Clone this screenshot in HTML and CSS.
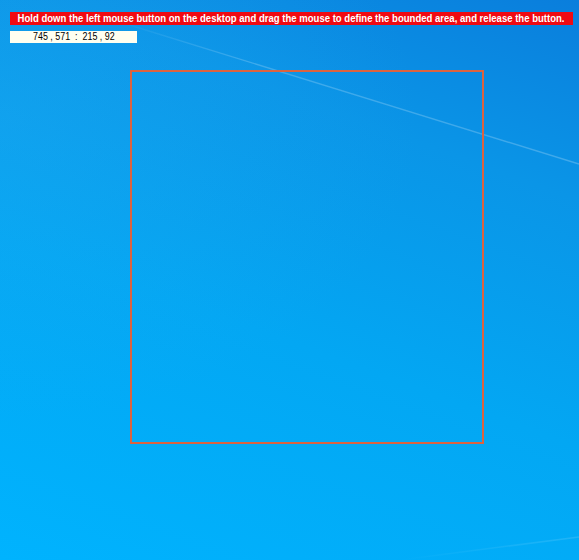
FILE: index.html
```html
<!DOCTYPE html>
<html lang="en">

<head>
  <meta charset="UTF-8">
  <meta name="viewport" content="width=device-width, initial-scale=1.0">
  <title>Define bounded area</title>
  <link rel="stylesheet" href="styles.css">
</head>

<body>
  <div class="desktop">
    <svg class="wallpaper-lines" width="579" height="560" viewBox="0 0 579 560">
      <defs>
        <linearGradient id="streak" x1="0" y1="0" x2="1" y2="0">
          <stop offset="0" stop-color="#ffffff" stop-opacity="0"></stop>
          <stop offset="0.3" stop-color="#ffffff" stop-opacity="0.2"></stop>
          <stop offset="1" stop-color="#ffffff" stop-opacity="0.22"></stop>
        </linearGradient>
        <linearGradient id="streak2" x1="0" y1="0" x2="1" y2="0">
          <stop offset="0" stop-color="#ffffff" stop-opacity="0"></stop>
          <stop offset="1" stop-color="#ffffff" stop-opacity="0.12"></stop>
        </linearGradient>
      </defs>
      <line x1="110" y1="19" x2="579" y2="164" stroke="url(#streak)" stroke-width="1.4"></line>
      <line x1="400" y1="560" x2="579" y2="537" stroke="url(#streak2)" stroke-width="1.5"></line>
    </svg>

    <div class="hint-bar"><span class="condensed">Hold down the left mouse button on the desktop and drag the mouse to define the bounded area, and release the button.</span></div>
    <div class="coords"><span class="condensed">745 , 571&nbsp;&nbsp;:&nbsp;&nbsp;215 , 92</span></div>

    <div class="selection"></div>
  </div>
</body>

</html>
```

FILE: styles.css
```css
html,
body {
  margin: 0;
  padding: 0;
}

body {
  font-family: "Liberation Sans", Arial, sans-serif;
  background-color: #069fec;
}

.desktop {
  position: relative;
  width: 579px;
  height: 560px;
  overflow: hidden;
  padding: 12px 6px 0 10px;
  box-sizing: border-box;
  background:
    radial-gradient(ellipse 420px 300px at 0px 120px, rgba(40, 170, 240, 0.3), rgba(40, 170, 240, 0)),
    linear-gradient(200deg, #0a7edc 0%, #0a95e7 26%, #03a7f3 58%, #00b3fe 100%);
}

.wallpaper-lines {
  position: absolute;
  top: 0;
  left: 0;
}

.condensed {
  display: inline-block;
  white-space: nowrap;
}

.hint-bar {
  position: relative;
  display: flex;
  justify-content: center;
  height: 13px;
  line-height: 13px;
  background-color: #f00a12;
  color: #ffffff;
  font-weight: bold;
  font-size: 11px;
}

.hint-bar .condensed {
  transform: scaleX(0.868);
}

.coords {
  position: relative;
  display: flex;
  justify-content: center;
  width: 127px;
  height: 12px;
  margin-top: 6px;
  line-height: 12px;
  background-color: #fffff0;
  color: #000000;
  font-size: 10px;
}

.coords .condensed {
  transform: scaleX(0.89);
}

.selection {
  position: absolute;
  left: 130px;
  top: 70px;
  width: 350px;
  height: 370px;
  border: 2px solid #dc6340;
}
```
